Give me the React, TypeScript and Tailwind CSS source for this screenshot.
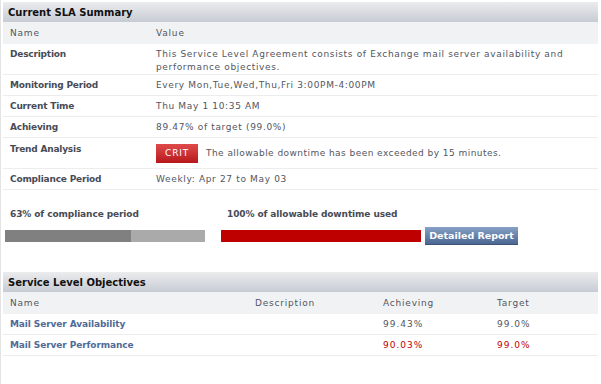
import React from "react";

const summary = [
  { label: "Monitoring Period", value: "Every Mon,Tue,Wed,Thu,Fri 3:00PM-4:00PM" },
  { label: "Current Time", value: "Thu May 1 10:35 AM" },
  { label: "Achieving", value: "89.47% of target (99.0%)" },
];

const objectives = [
  { name: "Mail Server Availability", achieving: "99.43%", target: "99.0%", bad: false },
  { name: "Mail Server Performance", achieving: "90.03%", target: "99.0%", bad: true },
];

function SectionHeader({ title }: { title: string }) {
  return (
    <div className="h-[20px] flex items-center pl-[5px] bg-gradient-to-b from-[#ebecee] to-[#c7ccd4] text-[10px] font-bold tracking-normal text-[#111]">
      {title}
    </div>
  );
}

function Row({ label, children, className = "" }: { label: string; children: React.ReactNode; className?: string }) {
  return (
    <div className={"flex border-b border-[#ededed] " + className}>
      <div className="w-[153px] shrink-0 pl-[7px] font-bold tracking-[-0.2px] text-[#474b56]">{label}</div>
      <div className="flex-1">{children}</div>
    </div>
  );
}

export default function App() {
  return (
    <div className="w-[601px] h-[384px] bg-white border-l border-[#e3e3e3] font-['DejaVu_Sans',sans-serif] text-[9px] leading-[13px] tracking-[0.65px] text-[#525661]">
      <div className="ml-[2px] w-[595px] pt-[2px]">
        <SectionHeader title="Current SLA Summary" />
        <div className="flex h-[22px] items-center bg-[#f1f2f4] tracking-[0.8px]">
          <div className="w-[153px] pl-[7px]">Name</div>
          <div>Value</div>
        </div>

        <Row label="Description" className="h-[31px] pt-[4px]">
          This Service Level Agreement consists of Exchange mail server availability and performance objectives.
        </Row>
        {summary.map((r) => (
          <Row key={r.label} label={r.label} className="h-[21px] items-center">
            {r.value}
          </Row>
        ))}
        <Row label="Trend Analysis" className="h-[31px] pt-[5px]">
          <div className="flex items-center gap-[8px] pt-[1px]">
            <span className="h-[19px] w-[42px] flex items-center justify-center bg-gradient-to-b from-[#de4a4a] to-[#b8141a] text-white tracking-[0.8px]">
              CRIT
            </span>
            <span className="tracking-[0.45px]">The allowable downtime has been exceeded by 15 minutes.</span>
          </div>
        </Row>
        <Row label="Compliance Period" className="h-[21px] items-center">
          Weekly: Apr 27 to May 03
        </Row>

        <div className="flex pl-[2px] pt-[18px] font-bold tracking-[-0.1px] text-[#474b56]">
          <div className="w-[200px] pl-[5px]">63% of compliance period</div>
          <div className="ml-[16px] pl-[6px]">100% of allowable downtime used</div>
        </div>
        <div className="flex items-center pl-[2px] mt-[6px]">
          <div className="flex w-[200px] h-[12px]">
            <div className="w-[126px] bg-[#808080]" />
            <div className="flex-1 bg-[#aaaaaa]" />
          </div>
          <div className="ml-[16px] w-[200px] h-[12px] bg-[#bf0000]" />
          <div className="ml-[4px] h-[18px] w-[93px] flex items-center justify-center bg-gradient-to-b from-[#86a2c6] to-[#4c6792] border-b border-[#3d5478] text-white font-bold tracking-normal text-[9.5px]">
            Detailed Report
          </div>
        </div>

        <div className="mt-[27px]">
          <SectionHeader title="Service Level Objectives" />
          <div className="flex h-[22px] items-center bg-[#f1f2f4] tracking-[0.8px]">
            <div className="w-[252px] pl-[7px]">Name</div>
            <div className="w-[128px]">Description</div>
            <div className="w-[114px]">Achieving</div>
            <div>Target</div>
          </div>
          {objectives.map((o) => (
            <div key={o.name} className="flex h-[21px] items-center border-b border-[#ededed]">
              <div className="w-[252px] pl-[7px] font-bold tracking-[-0.1px] text-[#4f6b98]">{o.name}</div>
              <div className="w-[128px]" />
              <div className={"w-[114px] tracking-[1px] " + (o.bad ? "text-[#c00000]" : "")}>{o.achieving}</div>
              <div className={"tracking-[1px] " + (o.bad ? "text-[#c00000]" : "")}>{o.target}</div>
            </div>
          ))}
        </div>
      </div>
    </div>
  );
}
